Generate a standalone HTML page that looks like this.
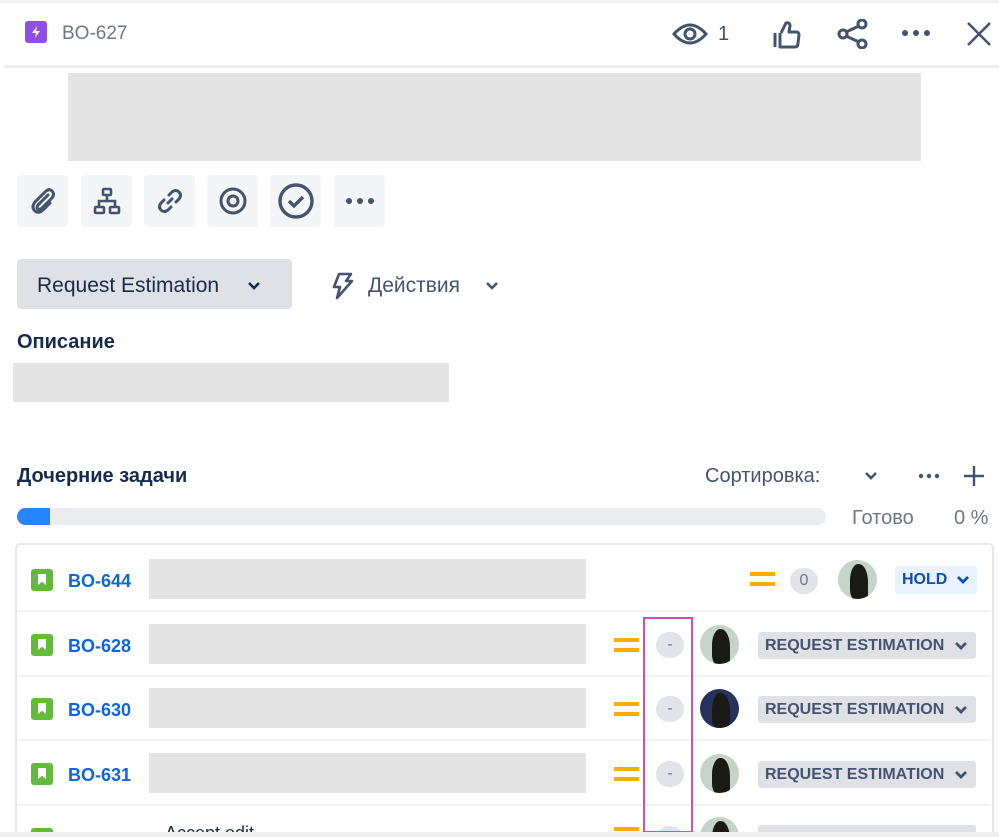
<!DOCTYPE html>
<html><head><meta charset="utf-8"><style>
*{margin:0;padding:0;box-sizing:border-box}
html,body{width:999px;height:837px;overflow:hidden}
body{background:#fff;font-family:"Liberation Sans","DejaVu Sans",sans-serif;color:#42526e;position:relative}
.a{position:absolute}
.ib{position:absolute;top:175px;width:51px;height:52px;background:#f4f5f7;border-radius:4px;display:flex;align-items:center;justify-content:center}
.row{position:absolute;left:17px;width:974px;height:64px;border-bottom:2px solid #f1f2f4}
.ic{position:absolute;left:14px;width:22px;height:22px;background:#63ba3c;border-radius:3px}
.ic:after{content:"";position:absolute;left:7px;top:5px;width:8px;height:11px;background:#fff;clip-path:polygon(0 0,100% 0,100% 100%,50% 70%,0 100%)}
.key{position:absolute;left:51px;color:#0c66e4;font-size:18px;font-weight:bold}
.gb{position:absolute;left:132px;width:437px;height:40px;background:#e4e4e4}
.pr{position:absolute;width:25px;height:14px;border-top:4px solid #ffab00;border-bottom:4px solid #ffab00}
.bd{position:absolute;width:28px;height:26px;border-radius:13px;background:#e2e4e9;color:#6b778c;font-size:16px;text-align:center;line-height:26px}
.av{position:absolute;width:39px;height:39px;border-radius:50%;background:#c5d3c8;overflow:hidden}
.av:after{content:"";position:absolute;left:12px;top:4px;width:18px;height:36px;background:#1a1a14;border-radius:45% 50% 10% 30%}
.st{position:absolute;left:741px;width:218px;height:27px;background:#dfe1e6;border-radius:3px;color:#44546f;font-weight:bold;font-size:16px;line-height:27px;padding-left:7px}
.st svg,.hd svg{position:absolute;top:9px}
</style></head><body>
<div class="a" style="left:0;top:0;width:999px;height:3px;background:#f1f2f4"></div>
<div class="a" style="left:25px;top:21px;width:22px;height:22px;background:#904ee2;border-radius:3px"><svg width="22" height="22" viewBox="0 0 22 22"><path d="M12 5 L7 12 H11 L10 17 L15 10 H11 Z" fill="#fff"/></svg></div>
<div class="a" style="left:62px;top:23px;font-size:19px;color:#6b778c">BO-627</div>
<svg class="a" style="left:672px;top:20px" width="36" height="28" viewBox="0 0 36 28"><path d="M2 14 Q18 -4 34 14 Q18 32 2 14Z" fill="none" stroke="#44546f" stroke-width="3"/><circle cx="18" cy="14" r="5" fill="none" stroke="#44546f" stroke-width="3"/></svg>
<div class="a" style="left:718px;top:23px;font-size:20px;color:#44546f">1</div>
<svg class="a" style="left:772px;top:20px" width="30" height="30" viewBox="0 0 30 30"><path d="M3 13 V27 M8 13 V27 H23 Q26 27 26 23 L27 15 Q27 12 24 12 H17 L18 6 Q18 2 14 3 L9 13" fill="none" stroke="#44546f" stroke-width="3" stroke-linejoin="round"/></svg>
<svg class="a" style="left:837px;top:19px" width="32" height="30" viewBox="0 0 32 30"><circle cx="6" cy="15" r="4" fill="none" stroke="#44546f" stroke-width="3"/><circle cx="25" cy="5" r="4" fill="none" stroke="#44546f" stroke-width="3"/><circle cx="25" cy="25" r="4" fill="none" stroke="#44546f" stroke-width="3"/><path d="M9 13 L22 7 M9 17 L22 23" stroke="#44546f" stroke-width="3"/></svg>
<svg class="a" style="left:900px;top:28px" width="32" height="10"><circle cx="5" cy="5" r="3" fill="#44546f"/><circle cx="16" cy="5" r="3" fill="#44546f"/><circle cx="27" cy="5" r="3" fill="#44546f"/></svg>
<svg class="a" style="left:966px;top:21px" width="26" height="26"><path d="M2 2 L24 24 M24 2 L2 24" stroke="#44546f" stroke-width="2.6"/></svg>
<div class="a" style="left:4px;top:65px;width:995px;height:3px;background:#ebecf0"></div>
<div class="a" style="left:68px;top:73px;width:853px;height:88px;background:#e4e4e4"></div>

<div class="ib" style="left:17px"><svg width="30" height="30" viewBox="0 0 30 30"><path d="M20 9 L10 19 Q8 22 10 23 Q12 24 14 22 L24 12 Q27 8 24 5 Q21 2 17 6 L7 16 Q3 21 7 25 Q11 28 15 24 L22 17" fill="none" stroke="#44546f" stroke-width="3" stroke-linecap="round"/></svg></div>
<div class="ib" style="left:81px"><svg width="30" height="30" viewBox="0 0 30 30" fill="none" stroke="#44546f" stroke-width="2.6"><rect x="11" y="3" width="8" height="6" rx="1"/><rect x="3" y="21" width="9" height="6" rx="1"/><rect x="18" y="21" width="9" height="6" rx="1"/><path d="M15 9 V15 M7 21 V15 H23 V21"/></svg></div>
<div class="ib" style="left:144px"><svg width="30" height="30" viewBox="0 0 30 30" fill="none" stroke="#44546f" stroke-width="3" stroke-linecap="round"><path d="M13 17 L17 13"/><path d="M14 9 L17 6 Q21 3 24 6 Q27 9 24 13 L21 16"/><path d="M16 21 L13 24 Q9 27 6 24 Q3 21 6 17 L9 14"/></svg></div>
<div class="ib" style="left:207px"><svg width="30" height="30"><circle cx="15" cy="15" r="12" fill="none" stroke="#44546f" stroke-width="3"/><circle cx="15" cy="15" r="5" fill="none" stroke="#44546f" stroke-width="3"/></svg></div>
<div class="ib" style="left:270px"><svg width="38" height="38"><circle cx="19" cy="19" r="16" fill="none" stroke="#44546f" stroke-width="3.4"/><path d="M12 19 L17 24 L26 15" fill="none" stroke="#44546f" stroke-width="3.4"/></svg></div>
<div class="ib" style="left:334px"><svg width="32" height="10"><circle cx="5" cy="5" r="3" fill="#44546f"/><circle cx="16" cy="5" r="3" fill="#44546f"/><circle cx="27" cy="5" r="3" fill="#44546f"/></svg></div>

<div class="a" style="left:17px;top:259px;width:275px;height:50px;background:#dfe1e6;border-radius:4px"></div>
<div class="a" style="left:37px;top:274px;font-size:21px;color:#172b4d">Request Estimation</div>
<svg class="a" style="left:247px;top:281px" width="14" height="10"><path d="M2 2 L7 7 L12 2" fill="none" stroke="#172b4d" stroke-width="2.6"/></svg>
<svg class="a" style="left:329px;top:272px" width="26" height="28" viewBox="0 0 26 28"><path d="M10 2 H22 L17 9 H23 L8 26 L11 15 H5 Z" fill="none" stroke="#44546f" stroke-width="2.6" stroke-linejoin="round"/></svg>
<div class="a" style="left:368px;top:274px;font-size:21px;color:#44546f">Действия</div>
<svg class="a" style="left:485px;top:281px" width="14" height="10"><path d="M2 2 L7 7 L12 2" fill="none" stroke="#44546f" stroke-width="2.6"/></svg>

<div class="a" style="left:17px;top:331px;font-size:20px;color:#172b4d;font-weight:bold">Описание</div>
<div class="a" style="left:13px;top:363px;width:436px;height:39px;background:#e4e4e4"></div>

<div class="a" style="left:17px;top:465px;font-size:20px;color:#172b4d;font-weight:bold">Дочерние задачи</div>
<div class="a" style="left:705px;top:465px;font-size:20px;color:#44546f">Сортировка:</div>
<svg class="a" style="left:864px;top:471px" width="14" height="10"><path d="M2 2 L7 7 L12 2" fill="none" stroke="#44546f" stroke-width="2.6"/></svg>
<svg class="a" style="left:918px;top:473px" width="22" height="6"><circle cx="3" cy="3" r="2.2" fill="#44546f"/><circle cx="11" cy="3" r="2.2" fill="#44546f"/><circle cx="19" cy="3" r="2.2" fill="#44546f"/></svg>
<svg class="a" style="left:963px;top:465px" width="22" height="22"><path d="M11 1 V21 M1 11 H21" stroke="#44546f" stroke-width="2.4"/></svg>
<div class="a" style="left:17px;top:508px;width:809px;height:17px;background:#ebecf0;border-radius:9px"></div>
<div class="a" style="left:17px;top:508px;width:33px;height:17px;background:#2684ff;border-radius:9px 0 0 9px"></div>
<div class="a" style="left:852px;top:507px;font-size:20px;color:#6b778c">Готово</div>
<div class="a" style="left:954px;top:507px;font-size:20px;color:#6b778c">0 %</div>

<div class="a" style="left:15px;top:543px;width:979px;height:300px;border:2px solid #e6e8ec;border-radius:5px"></div>
<div class="row" style="top:548px">
 <div class="ic" style="top:21px"></div><div class="key" style="top:23px">BO-644</div><div class="gb" style="top:11px"></div>
 <div class="pr" style="left:733px;top:24px"></div><div class="bd" style="left:773px;top:20px">0</div><div class="av" style="left:821px;top:12px"></div>
 <div class="a hd" style="left:878px;top:18px;width:82px;height:28px;background:#e9f2ff;border-radius:3px;color:#0c4fb0;font-weight:bold;font-size:16px;line-height:28px;padding-left:7px">HOLD<svg style="left:61px" width="14" height="10"><path d="M2 2 L7 7 L12 2" fill="none" stroke="#0c4fb0" stroke-width="2.8"/></svg></div>
</div>
<div class="row" style="top:613px">
 <div class="ic" style="top:21px"></div><div class="key" style="top:23px">BO-628</div><div class="gb" style="top:11px"></div>
 <div class="pr" style="left:597px;top:25px"></div><div class="bd" style="left:639px;top:19px">-</div><div class="av" style="left:683px;top:12px"></div>
 <div class="st" style="top:19px">REQUEST ESTIMATION<svg style="left:196px" width="14" height="10"><path d="M2 2 L7 7 L12 2" fill="none" stroke="#44546f" stroke-width="2.8"/></svg></div>
</div>
<div class="row" style="top:677px">
 <div class="ic" style="top:21px"></div><div class="key" style="top:23px">BO-630</div><div class="gb" style="top:11px"></div>
 <div class="pr" style="left:597px;top:25px"></div><div class="bd" style="left:639px;top:19px">-</div><div class="av" style="left:683px;top:12px;background:#26325a"></div>
 <div class="st" style="top:19px">REQUEST ESTIMATION<svg style="left:196px" width="14" height="10"><path d="M2 2 L7 7 L12 2" fill="none" stroke="#44546f" stroke-width="2.8"/></svg></div>
</div>
<div class="row" style="top:742px">
 <div class="ic" style="top:21px"></div><div class="key" style="top:23px">BO-631</div><div class="gb" style="top:11px"></div>
 <div class="pr" style="left:597px;top:25px"></div><div class="bd" style="left:639px;top:19px">-</div><div class="av" style="left:683px;top:12px"></div>
 <div class="st" style="top:19px">REQUEST ESTIMATION<svg style="left:196px" width="14" height="10"><path d="M2 2 L7 7 L12 2" fill="none" stroke="#44546f" stroke-width="2.8"/></svg></div>
</div>
<div class="row" style="top:807px;border:none">
 <div class="ic" style="top:21px"></div><div class="key" style="top:23px">BO-632</div><div class="a" style="left:148px;top:16px;font-size:18px;color:#172b4d">Accept edit</div>
 <div class="pr" style="left:597px;top:20px"></div><div class="bd" style="left:639px;top:19px"></div><div class="av" style="left:683px;top:10px"></div>
 <div class="st" style="top:18px"></div>
</div>
<div class="a" style="left:643px;top:617px;width:50px;height:216px;border:2px solid #d04fb0"></div>
<div class="a" style="left:0;top:832px;width:999px;height:5px;background:#eceef0"></div>
</body></html>
